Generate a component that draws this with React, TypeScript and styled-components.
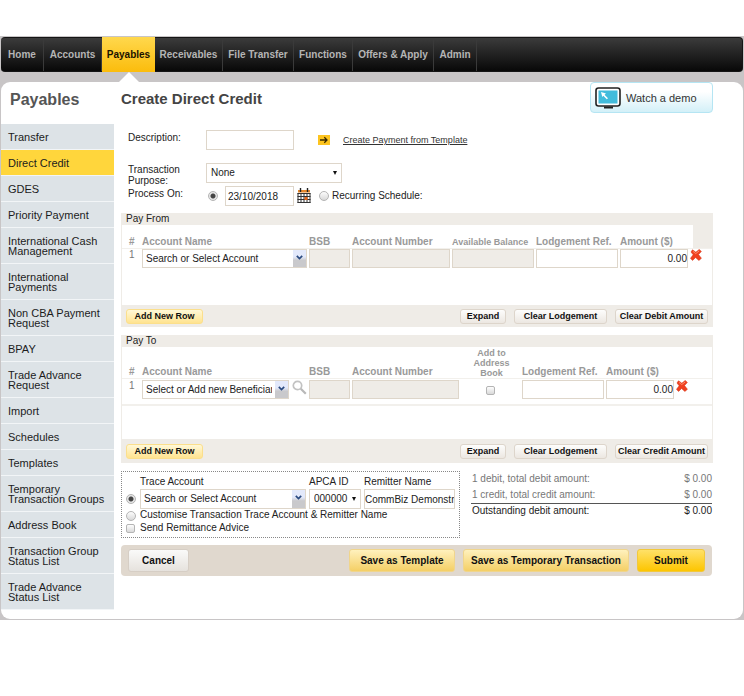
import React from "react";
import styled, { createGlobalStyle, css } from "styled-components";

const GlobalStyle = createGlobalStyle`
  *, *::before, *::after { box-sizing: border-box; }
  body { margin: 0; background: #fff; }
  body, button, input, select {
    font-family: "Liberation Sans", Arial, sans-serif;
    font-size: 10px;
    line-height: 12px;
    color: #222;
  }
`;

const Page = styled.div`
  padding: 36px 0 76px;
`;

const Frame = styled.div`
  padding: 1px;
  background: #c8c5c6;
`;

/* Top navigation */

const NavBar = styled.nav`
  display: flex;
  height: 35px;
  margin-bottom: 10px;
  border: 1px solid #151515;
  border-left: 0;
  border-radius: 4px;
  background: linear-gradient(#3b3b3b, #080808);
`;

const NavLink = styled.a<{ $width: number; $active?: boolean }>`
  position: relative;
  display: flex;
  flex: 0 1 ${(p) => p.$width}px;
  align-items: center;
  justify-content: center;
  border-right: 1px solid #3a3a3a;
  color: #b5b5b5;
  font-weight: bold;
  white-space: nowrap;
  text-decoration: none;
  ${(p) =>
    p.$active &&
    css`
      margin: -1px 0;
      border-right: 0;
      background: linear-gradient(#ffd84d, #fbbc0c);
      color: #1a1200;

      &::after {
        content: "";
        position: absolute;
        top: 100%;
        left: 50%;
        margin-left: -10px;
        border: 10px solid transparent;
        border-top: 0;
        border-bottom-color: #fff;
      }
    `}
`;

/* Card with the side menu and the form */

const Card = styled.div`
  display: flex;
  padding-bottom: 9px;
  border-radius: 9px;
  background: #fff;
`;

const Sidebar = styled.aside`
  flex: none;
  width: 113px;
`;

const SidebarTitle = styled.h2`
  height: 42px;
  margin: 0;
  padding: 8px 9px 0;
  color: #555;
  font-size: 16px;
  line-height: 20px;
`;

const SideLink = styled.a<{ $active?: boolean }>`
  display: block;
  padding: 8px 6px 7px 7px;
  border-bottom: 1px solid #f2f5f7;
  background: ${(p) => (p.$active ? "#ffd63c" : "#dde3e7")};
  color: #1c1c1c;
  font-size: 11px;
  line-height: 10px;
  text-decoration: none;
`;

const Main = styled.main`
  flex: 1;
  min-width: 0;
  padding: 0 30px 0 7px;
`;

const MainHeader = styled.header`
  display: flex;
  justify-content: space-between;
  height: 48px;
`;

const Title = styled.h1`
  margin: 0;
  padding-top: 8px;
  color: #444;
  font-size: 15px;
  line-height: 18px;
`;

const DemoButton = styled.button`
  display: flex;
  align-items: center;
  gap: 5px;
  width: 123px;
  height: 31px;
  padding: 0 4px;
  border: 1px solid #b5e5f3;
  border-radius: 4px;
  background: linear-gradient(#fff 30%, #d3f0f8);
  color: #333;
  font-size: 11px;
`;

/* Form fields */

const fieldLook = css`
  height: 20px;
  border: 1px solid #ded6ca;
  border-radius: 0;
  background: #fff;
  outline: 0;
`;

const Field = styled.input<{ $width?: number; $right?: boolean }>`
  ${fieldLook}
  display: block;
  width: ${(p) => (p.$width ? `${p.$width}px` : "100%")};
  min-width: 0;
  padding: 0 ${(p) => (p.$right ? 0 : 2)}px;
  text-align: ${(p) => (p.$right ? "right" : "left")};

  &:disabled {
    background: #efece7;
  }
`;

const RemitterField = styled(Field)`
  padding: 0;
`;

const DetailRow = styled.div<{ $height: number }>`
  display: flex;
  min-height: ${(p) => p.$height}px;
  padding-left: 7px;
`;

const DetailLabel = styled.label`
  flex: none;
  width: 78px;
  padding-top: 2px;
`;

const PurposeLabel = styled(DetailLabel)`
  padding: 1px 20px 0 0;
  line-height: 11px;
`;

const TemplateLink = styled.a`
  display: flex;
  align-items: center;
  gap: 13px;
  height: 20px;
  margin-left: 24px;
  color: #333;
  font-size: 9px;
`;

const SelectBox = styled.span<{ $width: number }>`
  position: relative;
  display: block;
  flex: none;
  width: ${(p) => p.$width}px;
  height: 20px;

  &::after {
    content: "";
    position: absolute;
    top: 8px;
    right: 5px;
    border: 2px solid transparent;
    border-top: 4px solid #111;
    border-bottom: 0;
    pointer-events: none;
  }
`;

const Select = styled.select`
  ${fieldLook}
  width: 100%;
  padding: 0 4px;
  appearance: none;
`;

const tickLook = css`
  flex: none;
  margin: 0;
  appearance: none;
  border: 1px solid #b4b4b4;
  background: linear-gradient(#fdfdfd, #d9d9d9);
`;

const Radio = styled.input.attrs({ type: "radio" })`
  ${tickLook}
  width: 10px;
  height: 10px;
  border-radius: 50%;

  &:checked {
    background: radial-gradient(circle, #444 0 2px, #e6e6e6 3px);
  }
`;

const Check = styled.input.attrs({ type: "checkbox" })`
  ${tickLook}
  width: 9px;
  height: 9px;
  border-radius: 2px;
`;

const ProcessControls = styled.div`
  display: flex;
  align-items: center;
  height: 20px;
`;

const DateGroup = styled.div`
  display: flex;
  align-items: center;
  gap: 3px;
  margin: 0 8px 0 7px;
`;

const IconButton = styled.button`
  display: flex;
  flex: none;
  padding: 0;
  border: 0;
  background: none;
`;

const Choice = styled.label`
  display: flex;
  align-items: center;
  gap: 3px;
  white-space: nowrap;
`;

const ProcessOn = styled.div`
  display: flex;
  align-items: center;
  padding-left: 2px;
`;

const ComboBox = styled.div`
  ${fieldLook}
  display: flex;
  flex: 1;
  min-width: 0;
`;

const ComboInput = styled.input`
  flex: 1;
  min-width: 0;
  padding: 0 3px;
  border: 0;
  background: none;
  outline: 0;
`;

const ComboButton = styled.button`
  display: flex;
  flex: none;
  justify-content: center;
  width: 13px;
  padding: 5px 0 0;
  border: 0;
  background: linear-gradient(#e3e9fb 40%, #c9c9cc 60%);
`;

/* Account panels */

const Panel = styled.section`
  margin-bottom: 8px;
  border: solid #efece7;
  border-width: 0 1px;
`;

const PanelTitle = styled.h3`
  height: 12px;
  margin: 0;
  padding-left: 4px;
  background: #efece7;
  font-size: 10px;
  font-weight: normal;
`;

const PanelBody = styled.div<{ $height: number }>`
  min-height: ${(p) => p.$height}px;
`;

const Grid = styled.table<{ $ruled?: boolean }>`
  width: 100%;
  border-collapse: separate;
  border-spacing: 0;
  table-layout: fixed;

  td {
    height: ${(p) => (p.$ruled ? 28 : 22)}px;
    padding: ${(p) => (p.$ruled ? 1 : 0)}px 2px 0 0;
    border-top: 1px solid #f2f0ec;
    border-bottom: ${(p) => (p.$ruled ? "2px solid #f2f0ec" : "0")};
    vertical-align: top;
  }

  ${Field}, ${ComboBox} {
    height: 19px;
  }
`;

const Col = styled.col<{ $width?: number }>`
  width: ${(p) => (p.$width ? `${p.$width}px` : "auto")};
`;

const HeadCell = styled.th<{ $height: number; $small?: boolean; $center?: boolean; $shaded?: boolean }>`
  height: ${(p) => p.$height}px;
  padding: 0;
  background: ${(p) => (p.$shaded ? "#efece7" : "none")};
  color: #999;
  font-size: ${(p) => (p.$small ? 9 : 10)}px;
  line-height: ${(p) => (p.$center ? 10 : 12)}px;
  text-align: ${(p) => (p.$center ? "center" : "left")};
  vertical-align: bottom;
  white-space: nowrap;
`;

const RowNumber = styled.span`
  display: block;
  padding-left: 7px;
  color: #777;
`;

const HashMark = styled.span`
  padding-left: 7px;
`;

const CellLine = styled.div<{ $gap: number }>`
  display: flex;
  gap: ${(p) => p.$gap}px;
`;

const CellCenter = styled.div`
  display: flex;
  justify-content: center;
  padding-top: 6px;
`;

const PanelFooter = styled.footer<{ $height: number }>`
  display: flex;
  align-items: center;
  gap: 8px;
  height: ${(p) => p.$height}px;
  padding: 0 4px;
  background: #efece7;
`;

const SmallButton = styled.button<{ $width: number; $gold?: boolean }>`
  width: ${(p) => p.$width}px;
  height: 15px;
  padding: 0;
  border: 1px solid ${(p) => (p.$gold ? "#fbdf8c" : "#ddd5cb")};
  border-radius: 3px;
  background: ${(p) => (p.$gold ? "linear-gradient(#fff8d8, #ffe38f)" : "linear-gradient(#fdfdfc, #ece7e1)")};
  color: #111;
  font-size: 9px;
  font-weight: bold;
  line-height: 12px;
  white-space: nowrap;
`;

const Spacer = styled.span`
  flex: 1;
`;

/* Trace account, totals and actions */

const Bottom = styled.div`
  display: flex;
  gap: 11px;
  margin: 0 1px 7px 0;
`;

const TraceBox = styled.fieldset`
  display: grid;
  flex: 1;
  grid-template-columns: 11px minmax(0, 1fr) 52px 91px;
  column-gap: 3px;
  align-items: center;
  align-content: start;
  min-width: 0;
  height: 67px;
  margin: 0;
  padding: 4px;
  border: 1px dotted #888;
`;

const TraceLabel = styled.label<{ $wide?: boolean }>`
  height: 13px;
  grid-column: ${(p) => (p.$wide ? "2 / -1" : "auto")};
`;

const Totals = styled.table`
  flex: none;
  width: 241px;
  height: 47px;
  border-collapse: collapse;
  color: #777;

  td, th {
    height: 16px;
    padding: 0 0 0 1px;
    font-weight: normal;
    text-align: left;
  }

  td {
    text-align: right;
  }
`;

const OutstandingRow = styled.tr`
  border-top: 1px solid #555;
  color: #222;
`;

const ActionBar = styled.div`
  display: flex;
  align-items: center;
  gap: 8px;
  height: 31px;
  padding: 0 7px;
  margin-right: 1px;
  border-radius: 4px;
  background: #e0d8ce;
`;

const tones = {
  plain: ["#d6cec5", "#fafaf9", "#e6e2dd"],
  gold: ["#f0d58c", "#fff1bd", "#f4cf65"],
  strong: ["#f2c83a", "#ffe168", "#fdc500"],
};

const ActionButton = styled.button<{ $tone: keyof typeof tones; $width: number }>`
  width: ${(p) => p.$width}px;
  height: 23px;
  padding: 0;
  border: 1px solid ${(p) => tones[p.$tone][0]};
  border-radius: 3px;
  background: linear-gradient(${(p) => tones[p.$tone][1]}, ${(p) => tones[p.$tone][2]});
  color: #111;
  font-weight: bold;
  white-space: nowrap;
`;

/* Icons */

const MonitorIcon = () => (
  <svg width="26" height="22" viewBox="0 0 26 22" aria-hidden="true">
    <rect x="1" y="1" width="24" height="18" rx="2.5" fill="#fff" stroke="#222" strokeWidth="1.6" />
    <rect x="3.5" y="3.5" width="19" height="13" fill="#42bcdc" />
    <path d="M6 5l5 1.500-1.500 1.300 3.500 3.500-1.200 1L8.300 8.800 7.300 10z" fill="#fff" />
    <path d="M9 20.500h9" stroke="#222" strokeWidth="2" />
  </svg>
);

const ArrowIcon = () => (
  <svg width="12" height="10" viewBox="0 0 12 10" aria-hidden="true">
    <rect width="12" height="10" fill="#fdc41f" />
    <path d="M2 5h7M6.300 2.300L9 5 6.300 7.700" fill="none" stroke="#3a2a00" strokeWidth="1.300" />
  </svg>
);

const CalendarIcon = () => (
  <svg width="14" height="16" viewBox="0 0 14 16" aria-hidden="true">
    <rect x="1" y="2" width="12" height="12.500" fill="#fff" />
    <rect x="1" y="2" width="12" height="2.500" fill="#e8892c" />
    <path d="M3.500 0v4M10.500 0v4" stroke="#222" strokeWidth="1.400" />
    <path d="M.5 5.500h13M.5 8.500h13M.5 11.500h13M.5 14.500h13M1 5v10M4 5v10M7 5v10M10 5v10M13 5v10" stroke="#333" />
    <rect x="7.500" y="9" width="3" height="3" fill="#e2661c" />
  </svg>
);

const ChevronIcon = () => (
  <svg width="7" height="5" viewBox="0 0 7 5" aria-hidden="true">
    <path d="M.8.8l2.700 2.700L6.200.8" fill="none" stroke="#2a4a80" strokeWidth="1.700" />
  </svg>
);

const SearchIcon = () => (
  <svg width="15" height="15" viewBox="0 0 15 15" aria-hidden="true">
    <circle cx="5.500" cy="5.500" r="4.200" fill="#fff" stroke="#c2c2c2" strokeWidth="1.700" />
    <path d="M8.800 8.800L13.800 13.800" stroke="#b8b8b8" strokeWidth="2.200" />
  </svg>
);

const CrossIcon = () => (
  <svg width="12" height="12" viewBox="0 0 12 12" aria-hidden="true">
    <path d="M2.500 0.800L5.800 3.200 9.300.4 11.300 2.500 8.500 5.600 11.400 9.300 8.900 11.400 5.600 8.500 2.500 11.400 .5 9.300 3.200 5.800 1 3z" fill="#f0401f" stroke="#d9381a" strokeWidth=".6" />
    <path d="M3 2.400l2.700 2.200L9.200 2" fill="none" stroke="#ff8a68" />
  </svg>
);

/* Data */

const navItems = [
  { label: "Home", width: 43 },
  { label: "Accounts", width: 58 },
  { label: "Payables", width: 53, active: true },
  { label: "Receivables", width: 68 },
  { label: "File Transfer", width: 71 },
  { label: "Functions", width: 59 },
  { label: "Offers & Apply", width: 81 },
  { label: "Admin", width: 43 },
];

const sideItems = [
  "Transfer",
  "Direct Credit",
  "GDES",
  "Priority Payment",
  "International Cash Management",
  "International Payments",
  "Non CBA Payment Request",
  "BPAY",
  "Trade Advance Request",
  "Import",
  "Schedules",
  "Templates",
  "Temporary Transaction Groups",
  "Address Book",
  "Transaction Group Status List",
  "Trade Advance Status List",
];

const totals = [
  { label: "1 debit, total debit amount:", value: "$ 0.00" },
  { label: "1 credit, total credit amount:", value: "$ 0.00" },
];

function Combo({ id, label, value }: { id: string; label: string; value: string }) {
  return (
    <ComboBox>
      <ComboInput id={id} aria-label={label} defaultValue={value} />
      <ComboButton type="button" aria-label={`Open ${label}`}>
        <ChevronIcon />
      </ComboButton>
    </ComboBox>
  );
}

function AmountCell({ label }: { label: string }) {
  return (
    <CellLine $gap={2}>
      <Field $width={68} $right aria-label={label} defaultValue="0.00" />
      <IconButton type="button" aria-label="Delete row">
        <CrossIcon />
      </IconButton>
    </CellLine>
  );
}

function Footer({ clearLabel, height }: { clearLabel: string; height: number }) {
  return (
    <PanelFooter $height={height}>
      <SmallButton type="button" $gold $width={77}>Add New Row</SmallButton>
      <Spacer />
      <SmallButton type="button" $width={46}>Expand</SmallButton>
      <SmallButton type="button" $width={93}>Clear Lodgement</SmallButton>
      <SmallButton type="button" $width={93}>{clearLabel}</SmallButton>
    </PanelFooter>
  );
}

function PayFrom() {
  return (
    <Panel>
      <PanelTitle>Pay From</PanelTitle>
      <PanelBody $height={80}>
        <Grid>
          <colgroup>
            <Col $width={20} />
            <Col />
            <Col $width={43} />
            <Col $width={100} />
            <Col $width={84} />
            <Col $width={84} />
            <Col $width={73} />
            <Col $width={19} />
          </colgroup>
          <thead>
            <tr>
              <HeadCell $height={23}><HashMark>#</HashMark></HeadCell>
              <HeadCell $height={23}>Account Name</HeadCell>
              <HeadCell $height={23}>BSB</HeadCell>
              <HeadCell $height={23}>Account Number</HeadCell>
              <HeadCell $height={23} $small>Available Balance</HeadCell>
              <HeadCell $height={23}>Lodgement Ref.</HeadCell>
              <HeadCell $height={23}>Amount ($)</HeadCell>
              <HeadCell $height={23} $shaded />
            </tr>
          </thead>
          <tbody>
            <tr>
              <td><RowNumber>1</RowNumber></td>
              <td><CellLine $gap={0}><Combo id="from" label="Debit account" value="Search or Select Account" /></CellLine></td>
              <td><Field disabled aria-label="Debit BSB" /></td>
              <td><Field disabled aria-label="Debit account number" /></td>
              <td><Field disabled aria-label="Available balance" /></td>
              <td><Field aria-label="Debit lodgement reference" /></td>
              <td colSpan={2}><AmountCell label="Debit amount" /></td>
            </tr>
          </tbody>
        </Grid>
      </PanelBody>
      <Footer clearLabel="Clear Debit Amount" height={22} />
    </Panel>
  );
}

function PayTo() {
  return (
    <Panel>
      <PanelTitle>Pay To</PanelTitle>
      <PanelBody $height={92}>
        <Grid $ruled>
          <colgroup>
            <Col $width={20} />
            <Col />
            <Col $width={43} />
            <Col $width={109} />
            <Col $width={61} />
            <Col $width={84} />
            <Col $width={106} />
          </colgroup>
          <thead>
            <tr>
              <HeadCell $height={31}><HashMark>#</HashMark></HeadCell>
              <HeadCell $height={31}>Account Name</HeadCell>
              <HeadCell $height={31}>BSB</HeadCell>
              <HeadCell $height={31}>Account Number</HeadCell>
              <HeadCell $height={31} $small $center>Add to<br />Address<br />Book</HeadCell>
              <HeadCell $height={31}>Lodgement Ref.</HeadCell>
              <HeadCell $height={31}>Amount ($)</HeadCell>
            </tr>
          </thead>
          <tbody>
            <tr>
              <td><RowNumber>1</RowNumber></td>
              <td>
                <CellLine $gap={3}>
                  <Combo id="to" label="Beneficiary" value="Select or Add new Beneficiary" />
                  <IconButton type="button" aria-label="Search beneficiaries"><SearchIcon /></IconButton>
                </CellLine>
              </td>
              <td><Field disabled aria-label="Credit BSB" /></td>
              <td><Field disabled aria-label="Credit account number" /></td>
              <td><CellCenter><Check aria-label="Add to address book" /></CellCenter></td>
              <td><Field aria-label="Credit lodgement reference" /></td>
              <td><AmountCell label="Credit amount" /></td>
            </tr>
          </tbody>
        </Grid>
      </PanelBody>
      <Footer clearLabel="Clear Credit Amount" height={24} />
    </Panel>
  );
}

export default function App() {
  return (
    <Page>
      <GlobalStyle />
      <Frame>
        <NavBar>
          {navItems.map((item) => (
            <NavLink key={item.label} href="#" $width={item.width} $active={item.active}>
              {item.label}
            </NavLink>
          ))}
        </NavBar>
        <Card>
          <Sidebar>
            <SidebarTitle>Payables</SidebarTitle>
            {sideItems.map((label) => (
              <SideLink key={label} href="#" $active={label === "Direct Credit"}>{label}</SideLink>
            ))}
          </Sidebar>
          <Main>
            <MainHeader>
              <Title>Create Direct Credit</Title>
              <DemoButton type="button"><MonitorIcon />Watch a demo</DemoButton>
            </MainHeader>
            <DetailRow $height={33}>
              <DetailLabel htmlFor="description">Description:</DetailLabel>
              <Field id="description" $width={88} />
              <TemplateLink href="#"><ArrowIcon />Create Payment from Template</TemplateLink>
            </DetailRow>
            <DetailRow $height={23}>
              <PurposeLabel htmlFor="purpose">Transaction Purpose:</PurposeLabel>
              <SelectBox $width={136}>
                <Select id="purpose"><option>None</option></Select>
              </SelectBox>
            </DetailRow>
            <DetailRow $height={27}>
              <DetailLabel htmlFor="date">Process On:</DetailLabel>
              <ProcessControls>
                <ProcessOn><Radio name="when" defaultChecked aria-label="Process on date" /></ProcessOn>
                <DateGroup>
                  <Field id="date" $width={69} defaultValue="23/10/2018" />
                  <IconButton type="button" aria-label="Choose date"><CalendarIcon /></IconButton>
                </DateGroup>
                <Choice><Radio name="when" />Recurring Schedule:</Choice>
              </ProcessControls>
            </DetailRow>
            <PayFrom />
            <PayTo />
            <Bottom>
              <TraceBox>
                <span />
                <TraceLabel htmlFor="trace">Trace Account</TraceLabel>
                <TraceLabel htmlFor="apca">APCA ID</TraceLabel>
                <TraceLabel htmlFor="remitter">Remitter Name</TraceLabel>
                <Radio name="trace-mode" defaultChecked aria-label="Use trace account" />
                <Combo id="trace" label="Trace account" value="Search or Select Account" />
                <SelectBox $width={52}>
                  <Select id="apca"><option>000000</option></Select>
                </SelectBox>
                <RemitterField id="remitter" defaultValue="CommBiz Demonstration" />
                <Radio name="trace-mode" id="customise" />
                <TraceLabel $wide htmlFor="customise">Customise Transaction Trace Account &amp; Remitter Name</TraceLabel>
                <Check id="advice" />
                <TraceLabel $wide htmlFor="advice">Send Remittance Advice</TraceLabel>
              </TraceBox>
              <Totals>
                <tbody>
                  {totals.map((row) => (
                    <tr key={row.label}>
                      <th scope="row">{row.label}</th>
                      <td>{row.value}</td>
                    </tr>
                  ))}
                  <OutstandingRow>
                    <th scope="row">Outstanding debit amount:</th>
                    <td>$ 0.00</td>
                  </OutstandingRow>
                </tbody>
              </Totals>
            </Bottom>
            <ActionBar>
              <ActionButton type="button" $tone="plain" $width={61}>Cancel</ActionButton>
              <Spacer />
              <ActionButton type="button" $tone="gold" $width={106}>Save as Template</ActionButton>
              <ActionButton type="button" $tone="gold" $width={166}>Save as Temporary Transaction</ActionButton>
              <ActionButton type="submit" $tone="strong" $width={68}>Submit</ActionButton>
            </ActionBar>
          </Main>
        </Card>
      </Frame>
    </Page>
  );
}
